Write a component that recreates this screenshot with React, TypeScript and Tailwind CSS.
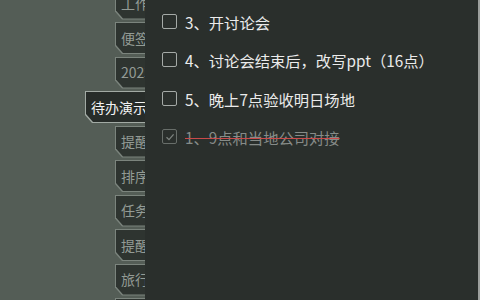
import React from 'react';

const tabs = [
  { label: '工作' },
  { label: '便签' },
  { label: '2023年计划' },
  { label: '待办演示', active: true },
  { label: '提醒' },
  { label: '排序' },
  { label: '任务' },
  { label: '提醒' },
  { label: '旅行' },
  { label: '学习' },
];

const todos = [
  { text: '3、开讨论会', done: false },
  { text: '4、讨论会结束后，改写ppt（16点）', done: false },
  { text: '5、晚上7点验收明日场地', done: false },
  { text: '1、9点和当地公司对接', done: true },
];

const chamfer = '[clip-path:polygon(0_0,100%_0,100%_100%,7px_100%,0_calc(100%-8px))]';

const Tab: React.FC<{ label: string; active?: boolean }> = ({ label, active }) => (
  <div
    className={
      active
        ? `h-[32px] w-[90px] shrink-0 ml-[85px] p-px bg-[#a2aaa4] ${chamfer}`
        : `h-[32px] w-[60px] shrink-0 ml-[115px] p-px bg-[#7b847d] ${chamfer}`
    }
  >
    <div
      className={
        active
          ? `h-full w-full flex items-center pl-[5px] bg-[#272c29] text-[#f2f2f2] whitespace-nowrap ${chamfer}`
          : `h-full w-full flex items-center pl-[5px] bg-[#2e3430] text-[#939b95] whitespace-nowrap ${chamfer}`
      }
    >
      {label}
    </div>
  </div>
);

const CheckBox: React.FC<{ done: boolean }> = ({ done }) => (
  <div
    className={
      done
        ? 'w-[15px] h-[15px] shrink-0 rounded-[2px] border-[1.5px] border-[#686e6a] flex items-center justify-center'
        : 'w-[15px] h-[15px] shrink-0 rounded-[2px] border-[1.5px] border-[#a5aaa7]'
    }
  >
    {done && (
      <svg width="10" height="10" viewBox="0 0 10 10" fill="none">
        <path d="M1.5 5.2 L4 7.6 L8.6 2.4" stroke="#7d837f" strokeWidth="1.3" />
      </svg>
    )}
  </div>
);

export default function App() {
  return (
    <div className="w-[480px] h-[300px] overflow-hidden flex bg-[#545d56] font-['Noto_Sans_CJK_SC','Noto_Sans',sans-serif]">
      <div className="w-[145px] h-full shrink-0 overflow-hidden">
        <div className="flex flex-col gap-[2.5px] mt-[-12.5px] text-[14px]">
          {tabs.map((t, i) => (
            <Tab key={i} label={t.label} active={t.active} />
          ))}
        </div>
      </div>
      <div className="flex-1 h-full bg-[#2a2f2c] pt-[2px] pl-[17px]">
        {todos.map((t, i) => (
          <div key={i} className="h-[38.5px] flex items-center gap-[8px]">
            <CheckBox done={t.done} />
            <span
              className={
                t.done
                  ? 'text-[15.3px] text-[#868b88] line-through decoration-[#c94a4a] decoration-1 mt-[2px]'
                  : 'text-[15.3px] text-[#ebebeb] mt-[2px]'
              }
            >
              {t.text}
            </span>
          </div>
        ))}
      </div>
      <div className="w-[2px] h-full bg-[#9c9f9d]" />
    </div>
  );
}
